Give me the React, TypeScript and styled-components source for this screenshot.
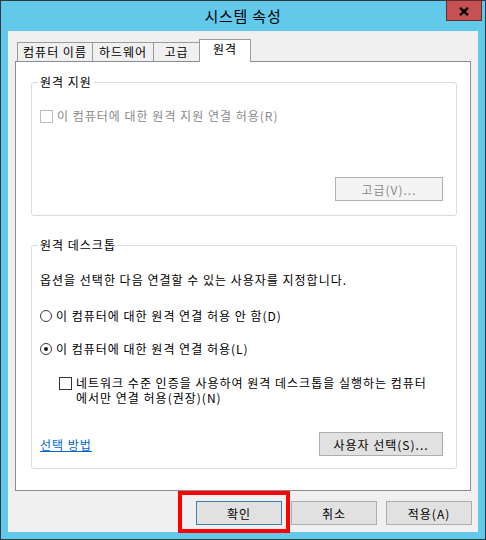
import React from "react"
import styled, { createGlobalStyle } from "styled-components"

const GlobalStyle = createGlobalStyle`
	html, body {
		margin: 0;
		padding: 0;
		background: #ffffff;
	}
	body {
		font-family: "Noto Sans CJK KR", "Noto Sans", sans-serif;
		font-size: 12px;
		letter-spacing: 1px;
		color: #000000;
	}
	* {
		box-sizing: border-box;
	}
`

const tabs = [
	{ label: "컴퓨터 이름", width: 76 },
	{ label: "하드웨어", width: 62 },
	{ label: "고급", width: 47 },
	{ label: "원격", width: 52, active: true }
]

export default function App() {
	return (
		<>
			<GlobalStyle />
			<Window>
				<TitleBar>
					<span />
					<Title>시스템 속성</Title>
					<CloseButton aria-label="닫기">
						<svg width="10" height="9" viewBox="0 0 10 9">
							<path d="M1 0.8 L9 8.2 M9 0.8 L1 8.2" stroke="#000" strokeWidth="2.4" />
						</svg>
					</CloseButton>
				</TitleBar>
				<Client>
					<TabStrip>
						{tabs.map(tab => (
							<Tab key={tab.label} $active={tab.active} $w={tab.width}>
								{tab.label}
							</Tab>
						))}
					</TabStrip>
					<Panel>
						<Group $padTop={18} $padBottom={14}>
							<Legend>원격 지원</Legend>
							<Row $disabled>
								<CheckBox $disabled />
								이 컴퓨터에 대한 원격 지원 연결 허용(R)
							</Row>
							<EndRow $gap={53}>
								<Button $w={108} disabled>
									고급(V)...
								</Button>
							</EndRow>
						</Group>
						<Group $padTop={19} $padBottom={12}>
							<Legend>원격 데스크톱</Legend>
							<Row>옵션을 선택한 다음 연결할 수 있는 사용자를 지정합니다.</Row>
							<Row $gap={20}>
								<Radio />
								이 컴퓨터에 대한 원격 연결 허용 안 함(D)
							</Row>
							<Row $gap={17}>
								<Radio $checked />
								이 컴퓨터에 대한 원격 연결 허용(L)
							</Row>
							<NestedCheck>
								<CheckBox />
								<CheckText>
									<div>네트워크 수준 인증을 사용하여 원격 데스크톱을 실행하는 컴퓨터</div>
									<div>에서만 연결 허용(권장)(N)</div>
								</CheckText>
							</NestedCheck>
							<FooterRow>
								<Link href="#">선택 방법</Link>
								<Button $w={124}>사용자 선택(S)...</Button>
							</FooterRow>
						</Group>
					</Panel>
					<DialogButtons>
						<Highlight>
							<Button $w={86} $default>
								확인
							</Button>
							<RedMark />
						</Highlight>
						<Button $w={86}>취소</Button>
						<Button $w={86}>적용(A)</Button>
					</DialogButtons>
				</Client>
			</Window>
		</>
	)
}

const Window = styled.div`
	width: 486px;
	height: 540px;
	border: 1px solid #2e3a40;
	background: #62c9ea;
	display: flex;
	flex-direction: column;
`
const TitleBar = styled.div`
	height: 30px;
	display: grid;
	grid-template-columns: 1fr auto 1fr;
	align-items: start;
`
const Title = styled.div`
	font-size: 15px;
	line-height: 30px;
	letter-spacing: 0.8px;
	color: #000000;
`
const CloseButton = styled.button`
	justify-self: end;
	width: 36px;
	height: 21px;
	margin: -1px 3px 0 0;
	padding: 1px 0 0 0;
	border: 1px solid #5c3030;
	background: #c75050;
	display: flex;
	align-items: center;
	justify-content: center;
`
const Client = styled.div`
	flex: 1;
	margin: 0 7px 7px;
	padding: 8px 7px 7px;
	background: #f0f0f0;
	display: flex;
	flex-direction: column;
`
const TabStrip = styled.div`
	height: 22px;
	padding-left: 2px;
	display: flex;
	align-items: flex-end;
`
const Tab = styled.div<{ $active?: boolean; $w: number }>`
	position: relative;
	z-index: ${p => (p.$active ? 2 : 1)};
	width: ${p => p.$w}px;
	height: ${p => (p.$active ? 23 : 19)}px;
	margin-bottom: ${p => (p.$active ? -1 : 0)}px;
	margin-left: -1px;
	border: 1px solid #9a9a9a;
	border-bottom: none;
	background: ${p => (p.$active ? "#ffffff" : "#f0f0f0")};
	line-height: ${p => (p.$active ? 18 : 17)}px;
	text-align: center;
	white-space: nowrap;
	&:first-child {
		margin-left: 0;
	}
`
const Panel = styled.div`
	position: relative;
	background: #ffffff;
	border: 1px solid #898c95;
	padding: 12px 13px 21px 15px;
	display: flex;
	flex-direction: column;
	gap: 21px;
`
const Group = styled.fieldset<{ $padTop: number; $padBottom: number }>`
	margin: 0;
	min-width: 0;
	border: 1px solid #d5dfe5;
	border-radius: 3px;
	padding: ${p => p.$padTop}px 13px ${p => p.$padBottom}px 8px;
	display: flex;
	flex-direction: column;
`
const Legend = styled.legend`
	margin-left: -2px;
	padding: 0 2px;
	line-height: 16px;
	font-size: 12px;
`
const Row = styled.div<{ $gap?: number; $disabled?: boolean }>`
	margin-top: ${p => p.$gap ?? 0}px;
	display: flex;
	align-items: center;
	gap: 4px;
	line-height: 16px;
	white-space: nowrap;
	color: ${p => (p.$disabled ? "#8a8a8a" : "#000000")};
`
const NestedCheck = styled.div`
	margin-top: 18px;
	padding-left: 19px;
	display: flex;
	align-items: flex-start;
	gap: 4px;
	& > span:first-child {
		margin-top: 2px;
	}
`
const CheckText = styled.div`
	display: flex;
	flex-direction: column;
	line-height: 15px;
	white-space: nowrap;
`
const CheckBox = styled.span<{ $disabled?: boolean }>`
	flex: none;
	width: 13px;
	height: 13px;
	border: 1px solid ${p => (p.$disabled ? "#bcbcbc" : "#333333")};
	background: #ffffff;
`
const Radio = styled.span<{ $checked?: boolean }>`
	flex: none;
	width: 12px;
	height: 12px;
	border: 1px solid #3c3c3c;
	border-radius: 50%;
	background: #ffffff;
	display: flex;
	align-items: center;
	justify-content: center;
	&::after {
		content: "";
		display: ${p => (p.$checked ? "block" : "none")};
		width: 4px;
		height: 4px;
		border-radius: 50%;
		background: #1a1a1a;
	}
`
const EndRow = styled.div<{ $gap: number }>`
	margin-top: ${p => p.$gap}px;
	display: flex;
	justify-content: flex-end;
`
const FooterRow = styled.div`
	margin-top: 27px;
	display: flex;
	align-items: center;
	justify-content: space-between;
`
const Link = styled.a`
	color: #0066cc;
	text-decoration: underline;
	line-height: 16px;
	margin-top: 2px;
`
const Button = styled.button<{ $w: number; $default?: boolean }>`
	width: ${p => p.$w}px;
	height: 24px;
	padding: 0;
	font-family: inherit;
	font-size: 12px;
	letter-spacing: 1px;
	color: #000000;
	background: #e1e1e1;
	border: 1px solid ${p => (p.$default ? "#3c7fb1" : "#adadad")};
	&:disabled {
		background: #f4f4f4;
		border-color: #adb2b5;
		color: #8a8a8a;
	}
`
const DialogButtons = styled.div`
	margin: 10px -1px 0 0;
	display: flex;
	justify-content: flex-end;
	gap: 9px;
`
const Highlight = styled.span`
	position: relative;
	display: inline-flex;
`
const RedMark = styled.span`
	position: absolute;
	top: -10px;
	left: -18px;
	right: -8px;
	bottom: -8px;
	border: 4px solid #ff0000;
	pointer-events: none;
`
